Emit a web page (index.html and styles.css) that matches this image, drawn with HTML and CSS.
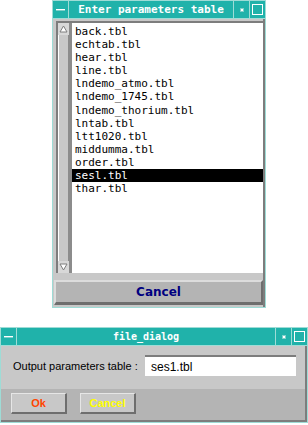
FILE: index.html
```html
<!DOCTYPE html>
<html lang="en">
<head>
    <meta charset="UTF-8">
    <title>Enter parameters table</title>
    <link rel="stylesheet" href="styles.css">
</head>
<body>
    <div class="win list-win">
        <div class="titlebar">
            <div class="tb-btn menu-btn"><span class="bar"></span></div>
            <div class="tb-title">Enter parameters table</div>
            <div class="tb-btn min-btn"><span class="dot"></span></div>
            <div class="tb-btn max-btn"><span class="box"></span></div>
        </div>
        <div class="win-body">
            <div class="list-box">
                <div class="scrollbar">
                    <div class="arrow up">
                        <svg width="9" height="8" viewBox="0 0 9 8"><polygon points="4.5,1 8,7 1,7" fill="#ffffff" stroke="#7d7d7d" stroke-width="1"/></svg>
                    </div>
                    <div class="track"></div>
                    <div class="arrow down">
                        <svg width="9" height="8" viewBox="0 0 9 8"><polygon points="1,1 8,1 4.5,7" fill="#ffffff" stroke="#7d7d7d" stroke-width="1"/></svg>
                    </div>
                </div>
                <ul class="files">
                    <li>back.tbl</li>
                    <li>echtab.tbl</li>
                    <li>hear.tbl</li>
                    <li>line.tbl</li>
                    <li>lndemo_atmo.tbl</li>
                    <li>lndemo_1745.tbl</li>
                    <li>lndemo_thorium.tbl</li>
                    <li>lntab.tbl</li>
                    <li>ltt1020.tbl</li>
                    <li>middumma.tbl</li>
                    <li>order.tbl</li>
                    <li class="selected">sesl.tbl</li>
                    <li>thar.tbl</li>
                </ul>
            </div>
            <div class="action-row">
                <button class="cancel-btn">Cancel</button>
            </div>
        </div>
    </div>

    <div class="win dialog-win">
        <div class="titlebar">
            <div class="tb-btn menu-btn"><span class="bar"></span></div>
            <div class="tb-title small">file_dialog</div>
            <div class="tb-btn min-btn"><span class="dot"></span></div>
            <div class="tb-btn max-btn"><span class="box"></span></div>
        </div>
        <div class="win-body">
            <div class="field-row">
                <label for="outTable">Output parameters table :</label>
                <input id="outTable" type="text" value="ses1.tbl">
            </div>
            <div class="dialog-buttons">
                <button class="ok">Ok</button>
                <button class="cancel">Cancel</button>
            </div>
        </div>
    </div>
</body>
</html>
```

FILE: styles.css
```css
body {
    margin: 0;
    padding: 0;
    background: #ffffff;
    font-family: "DejaVu Sans Mono", monospace;
    width: 308px;
    height: 425px;
    overflow: hidden;
}
.win {
    box-sizing: border-box;
    border: 1px solid #9edcd6;
    background: #c8c8c8;
    display: flex;
    flex-direction: column;
}
.list-win {
    margin-left: 52px;
    width: 214px;
    height: 308px;
}
.dialog-win {
    margin-top: 19px;
    width: 308px;
    height: 96px;
}
.titlebar {
    display: flex;
    height: 17px;
    flex: none;
    background: #20b2aa;
    border-bottom: 1px solid #9edcd6;
}
.tb-btn {
    width: 15px;
    display: flex;
    align-items: center;
    justify-content: center;
    border-right: 1px solid #9edcd6;
}
.max-btn {
    border-right: none;
}
.tb-title {
    flex: 1;
    text-align: center;
    color: #ffffff;
    font-family: "DejaVu Sans Mono", monospace;
    font-weight: bold;
    font-size: 11px;
    line-height: 17px;
    border-right: 1px solid #9edcd6;
}
.tb-title.small {
    font-size: 10px;
}
.bar {
    width: 9px;
    height: 1px;
    background: #ffffff;
    border-bottom: 1px solid #7fcfc9;
}
.dot {
    width: 2px;
    height: 2px;
    background: #ffffff;
    border: 1px solid #7fcfc9;
}
.box {
    width: 11px;
    height: 11px;
    box-sizing: border-box;
    border: 1px solid #ffffff;
}
.win-body {
    flex: 1;
    display: flex;
    flex-direction: column;
    border-right: 2px solid #7d7d7d;
}
.list-box {
    flex: 1;
    display: flex;
    margin: 2px 0 0 3px;
    border-top: 2px solid #7d7d7d;
    border-left: 2px solid #7d7d7d;
    background: #ffffff;
}
.scrollbar {
    width: 11px;
    background: #c8c8c8;
    display: flex;
    flex-direction: column;
    border-right: 3px solid #8c8c8c;
}
.arrow {
    height: 12px;
    background: #d8d8d8;
    display: flex;
    align-items: center;
    justify-content: center;
}
.track {
    flex: 1;
    border-left: 1px solid #ffffff;
    border-right: 1px solid #8c8c8c;
    background: #c8c8c8;
}
.files {
    list-style: none;
    margin: 0;
    padding: 2px 0 0 0;
    flex: 1;
    font-size: 11px;
    line-height: 13.1px;
    color: #000000;
}
.files li {
    padding-left: 3px;
}
.files .selected {
    background: #000000;
    color: #ffffff;
}
.action-row {
    padding: 7px 0 2px 1px;
}
.cancel-btn {
    display: block;
    width: 100%;
    height: 25px;
    background: #b4b4b4;
    border: none;
    border-top: 2px solid #dcdcdc;
    border-left: 2px solid #dcdcdc;
    border-bottom: 3px solid #6e6e6e;
    border-right: 2px solid #6e6e6e;
    color: #000080;
    font-family: "DejaVu Sans", sans-serif;
    font-weight: bold;
    font-size: 12px;
}
.field-row {
    height: 43px;
    box-sizing: border-box;
    display: flex;
    align-items: center;
    justify-content: space-between;
    padding: 0 9px 4px 12px;
    background: #c8c8c8;
}
.field-row label {
    font-family: "Liberation Sans", sans-serif;
    font-size: 11px;
    color: #000000;
    white-space: nowrap;
}
.field-row input {
    width: 151px;
    height: 21px;
    box-sizing: border-box;
    border: none;
    border-top: 2px solid #7d7d7d;
    background: #ffffff;
    font-family: "Liberation Sans", sans-serif;
    font-size: 12px;
    padding: 0 6px;
}
.dialog-buttons {
    flex: 1;
    display: flex;
    gap: 13px;
    padding: 4px 10px;
    background: #b4b4b4;
    align-items: flex-start;
    border-bottom: 2px solid #7d7d7d;
}
.dialog-buttons button {
    width: 56px;
    height: 21px;
    background: #c8c8c8;
    border: none;
    border-top: 1px solid #e6e6e6;
    border-left: 1px solid #e6e6e6;
    border-bottom: 2px solid #6e6e6e;
    border-right: 2px solid #6e6e6e;
    font-family: "Liberation Sans", sans-serif;
    font-size: 11px;
    font-weight: bold;
}
.ok {
    color: #ff4500;
}
.cancel {
    color: #ffff00;
}
```
